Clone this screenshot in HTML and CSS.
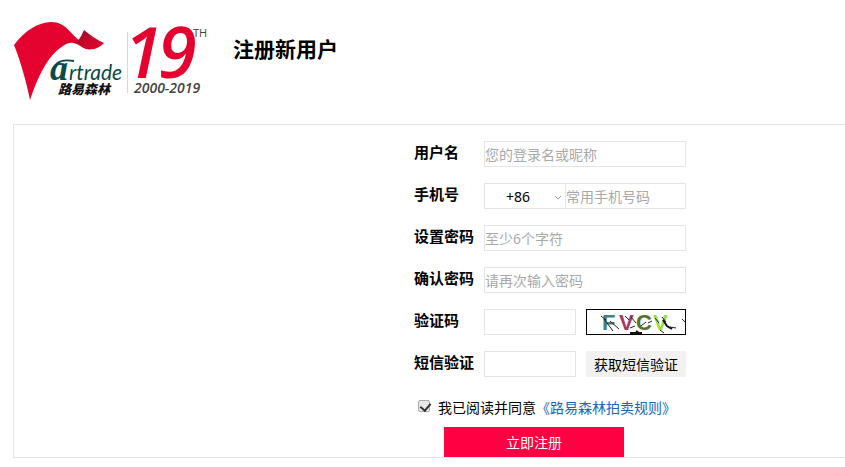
FILE: index.html
```html
<!DOCTYPE html>
<html lang="zh-CN">
<head>
	<meta charset="utf-8">
	<title>注册新用户</title>
	<link rel="stylesheet" href="styles.css">
</head>
<body>
	<header class="header">
		<a class="logo" href="#">
			<svg width="200" height="84" viewBox="0 0 200 84" role="img" aria-label="Artrade 路易森林">
				<defs>
					<linearGradient id="fold" x1="0" y1="0" x2="1" y2="1">
						<stop offset="0" stop-color="#8d0a1e"/>
						<stop offset="0.55" stop-color="#c80a2b"/>
						<stop offset="1" stop-color="#e8042f"/>
					</linearGradient>
				</defs>
				<path fill="#e4032e" d="M1 25C11 11 26 2 38 2C54 2 57 15 69 22C75 26 82 26 90 23C83 30 75 31 69 27C62 22 57 21 50 26C34 36 25 57 17 80C13 60 7 40 1 25Z"/>
				<path fill="url(#fold)" d="M71 10C77 15 84 20 91 23C85 30 76 31 69 27C65 24 63 23 60 23C66 22 68 16 71 10Z"/>
				<path fill="none" stroke="#0b4a46" stroke-width="2" d="M40 50C42 42 50 39 61 41"/>
				<text class="logo-a" x="37" y="60">a</text>
				<text class="logo-name" x="56" y="60">rtrade</text>
				<text class="logo-cn" x="45" y="74">路易森林</text>
				<path stroke="#d9d9d9" d="M114.500 12V73"/>
				<text class="logo-num" x="111" y="58">1</text>
				<text class="logo-num" x="145" y="58">9</text>
				<text class="logo-th" x="180" y="17">TH</text>
				<text class="logo-years" x="121" y="73">2000-2019</text>
			</svg>
		</a>
		<h1 class="title">注册新用户</h1>
	</header>

	<main class="panel">
		<form class="form">
			<div class="row">
				<label class="label" for="username">用户名</label>
				<input class="input" id="username" type="text" placeholder="您的登录名或昵称">
			</div>
			<div class="row">
				<label class="label" for="phone">手机号</label>
				<div class="phone">
					<div class="code">
						<select class="code-select" aria-label="国家代码">
							<option>+86</option>
						</select>
						<svg class="code-arrow" width="8" height="6" viewBox="0 0 8 6"><path d="M1 1L4 4L7 1" fill="none" stroke="#999"/></svg>
					</div>
					<input class="phone-input" id="phone" type="tel" placeholder="常用手机号码">
				</div>
			</div>
			<div class="row">
				<label class="label" for="password">设置密码</label>
				<input class="input" id="password" type="password" placeholder="至少6个字符">
			</div>
			<div class="row">
				<label class="label" for="confirm">确认密码</label>
				<input class="input" id="confirm" type="password" placeholder="请再次输入密码">
			</div>
			<div class="row">
				<label class="label" for="captcha">验证码</label>
				<input class="input short" id="captcha" type="text">
				<svg class="captcha" width="100" height="26" viewBox="0 0 100 26" role="img" aria-label="验证码">
					<rect x="0.500" y="0.500" width="99" height="25" fill="#fff" stroke="#000"/>
					<text x="16" y="21" fill="#45807d">F</text>
					<text x="33" y="21" fill="#a33a69">V</text>
					<text x="50" y="21" fill="#557329">C</text>
					<text x="67" y="21" fill="#98dc45">V</text>
					<path fill="none" stroke="#222" d="M15 7L20 11M18 10L27 22M24 12L33 20M39 7L43 11M45 8L50 14M44 19L49 17M55 17L60 13M62 14L66 12M69 9L73 14M76 8L80 13M74 21L78 24M84 18L90 19M96 10L99 13"/>
					<path fill="none" stroke="#111" stroke-width="2" d="M44 24H56M50 22L53 24M77 11L81 17L86 20"/>
				</svg>
			</div>
			<div class="row">
				<label class="label" for="sms">短信验证</label>
				<input class="input short" id="sms" type="text">
				<button class="sms-button" type="button">获取短信验证</button>
			</div>
			<div class="agree">
				<input class="agree-box" id="agree" type="checkbox" checked>
				<label for="agree">我已阅读并同意</label><a class="rules" href="#">《路易森林拍卖规则》</a>
			</div>
			<button class="submit" type="submit">立即注册</button>
		</form>
	</main>
</body>
</html>
```
FILE: styles.css
```css
* {
	box-sizing: border-box;
}
body {
	margin: 0;
	background: #fff;
	color: #000;
	font-family: "Noto Sans", "Noto Sans CJK SC", sans-serif;
	font-size: 14px;
	line-height: 20px;
}
input, select, button {
	font-family: inherit;
	font-size: 14px;
	border-radius: 0;
}

/* header */
.header {
	display: flex;
	align-items: flex-start;
	gap: 20px;
	padding: 20px 0 20px 13px;
}
.logo {
	display: block;
}
.logo svg {
	display: block;
	overflow: visible;
}
.logo-a {
	font: italic bold 36px "Liberation Serif", serif;
	fill: #0b4a46;
}
.logo-name {
	font: italic 21px Lato, sans-serif;
	fill: #0b4a46;
}
.logo-cn {
	font: italic 900 13px "Noto Sans CJK SC", sans-serif;
	fill: #111;
}
.logo-num {
	font: italic 600 70px "Open Sans", sans-serif;
	fill: #e4032e;
}
.logo-th {
	font: 11px "Open Sans", sans-serif;
	fill: #444;
}
.logo-years {
	font: italic 600 14px "Open Sans", sans-serif;
	fill: #444;
}
.title {
	margin: 14px 0 0;
	font-size: 21px;
	line-height: 30px;
	font-weight: bold;
}

/* form */
.panel {
	margin-left: 13px;
	padding: 16px 0 0 400px;
	border: 1px solid #e4e4e4;
	border-right: 0;
}
.form {
	width: 272px;
}
.row {
	display: flex;
	height: 26px;
	margin-bottom: 16px;
}
.label {
	flex: none;
	width: 70px;
	font-size: 15px;
	line-height: 22px;
	font-weight: bold;
}
.input {
	flex: 1;
	min-width: 0;
	padding: 0;
	border: 1px solid #e4e4e4;
	background: #fff;
}
.short {
	flex: none;
	width: 92px;
	margin-right: 10px;
}
::placeholder {
	color: #a9a9a9;
}
.phone {
	flex: 1;
	display: flex;
	min-width: 0;
	border: 1px solid #e4e4e4;
}
.code {
	position: relative;
	flex: none;
	width: 81px;
	border-right: 1px solid #e4e4e4;
}
.code-select {
	width: 100%;
	height: 100%;
	padding: 0 0 0 21px;
	border: 0;
	background: none;
	appearance: none;
}
.code-arrow {
	position: absolute;
	right: 3px;
	top: 11px;
	pointer-events: none;
}
.phone-input {
	flex: 1;
	min-width: 0;
	padding: 0;
	border: 0;
}
.captcha {
	font: bold 22px "Liberation Sans", sans-serif;
}
.sms-button {
	width: 100px;
	padding: 0;
	border: 0;
	background: #f2f1f0;
	color: #000;
}
.agree {
	display: flex;
	align-items: center;
	padding: 5px 0 9px 4px;
	white-space: nowrap;
}
.agree-box {
	appearance: none;
	display: flex;
	width: 12px;
	height: 12px;
	margin: 0 8px 4px 0;
	border: 1px solid #aaa;
	border-radius: 2px;
	background: #e8e8e8;
}
.agree-box:checked::before {
	content: "";
	width: 5px;
	height: 8px;
	margin: 0 0 0 3px;
	border: solid #333;
	border-width: 0 2px 2px 0;
	transform: rotate(40deg);
}
.rules {
	color: #1a66b8;
	text-decoration: none;
}
.submit {
	display: block;
	width: 180px;
	height: 30px;
	margin-left: 30px;
	padding: 0;
	border: 0;
	background: #ff0042;
	color: #fff;
}
```
